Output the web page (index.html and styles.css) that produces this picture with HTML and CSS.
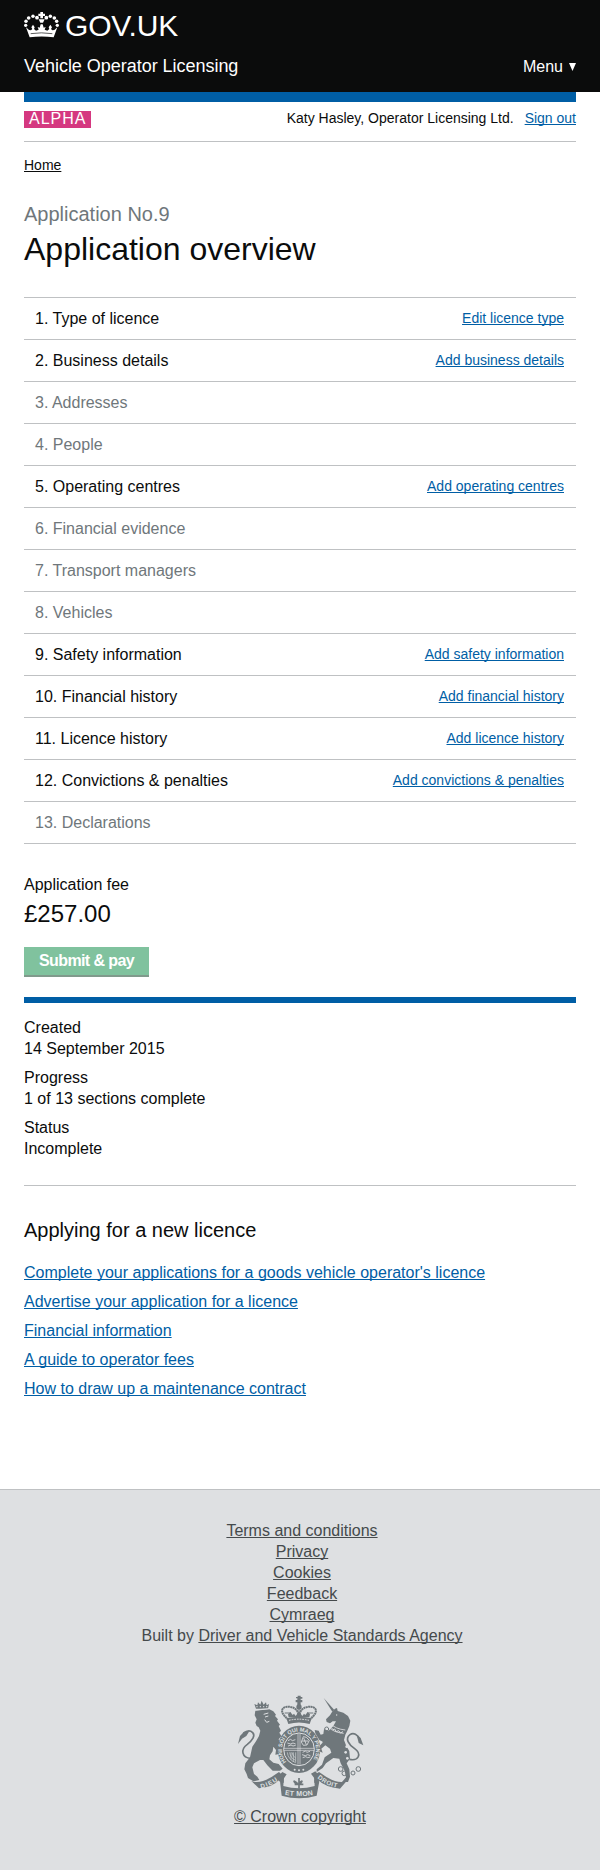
FILE: index.html
```html
<!DOCTYPE html>
<html lang="en">
<head>
<meta charset="utf-8">
<title>Application overview - Vehicle Operator Licensing</title>
<link rel="stylesheet" href="styles.css">
</head>
<body>
<header class="header">
  <a class="logo" href="#">
    <svg class="logo-crown" viewBox="0 0 105 78" fill="#fff" aria-hidden="true">
      <path d="M49 0h8v5h6v7h-6v7h-8v-7h-6V5h6z"/>
      <path d="M44 22h18l-5 10h-8z"/>
      <circle cx="39" cy="17" r="5.7"/><circle cx="27" cy="13" r="5.2"/><circle cx="14" cy="18" r="5.5"/><circle cx="6" cy="28" r="5.2"/><circle cx="5" cy="40" r="5"/>
      <circle cx="67" cy="17" r="5.7"/><circle cx="79" cy="13" r="5.2"/><circle cx="91" cy="18" r="5.5"/><circle cx="98" cy="28" r="5.2"/><circle cx="100" cy="40" r="5"/>
      <path d="M6 46l9 8 6 1 4-4-3-5 5-8 5 8-2 5 6 5 8-3-3-8 6 2 3-10h6l3 10 6-2-3 8 8 3 6-5-2-5 5-8 5 8-3 5 4 4 6-1 9-8-11 30q-36-5-72 0z"/>
      <path d="M20 65q32-5 65 0" fill="none" stroke="#0b0c0c" stroke-width="2"/>
    </svg>
    <span class="logo-text">GOV.UK</span>
  </a>
  <div class="header-row">
    <span class="service">Vehicle Operator Licensing</span>
    <a class="menu" href="#">Menu
      <svg class="menu-arrow" viewBox="0 0 7 8" aria-hidden="true"><path d="M0 0h7L3.5 8z" fill="#fff"/></svg>
    </a>
  </div>
</header>
<main class="page">
  <div class="phase">
    <span class="tag">ALPHA</span>
    <div class="user"><span>Katy Hasley, Operator Licensing Ltd.</span><a href="#">Sign out</a></div>
  </div>
  <nav class="crumbs"><a href="#">Home</a></nav>
  <p class="caption">Application No.9</p>
  <h1 class="title">Application overview</h1>
  <ul class="sections">
    <li class="row"><span>1. Type of licence</span><a href="#">Edit licence type</a></li>
    <li class="row"><span>2. Business details</span><a href="#">Add business details</a></li>
    <li class="row off"><span>3. Addresses</span></li>
    <li class="row off"><span>4. People</span></li>
    <li class="row"><span>5. Operating centres</span><a href="#">Add operating centres</a></li>
    <li class="row off"><span>6. Financial evidence</span></li>
    <li class="row off"><span>7. Transport managers</span></li>
    <li class="row off"><span>8. Vehicles</span></li>
    <li class="row"><span>9. Safety information</span><a href="#">Add safety information</a></li>
    <li class="row"><span>10. Financial history</span><a href="#">Add financial history</a></li>
    <li class="row"><span>11. Licence history</span><a href="#">Add licence history</a></li>
    <li class="row"><span>12. Convictions &amp; penalties</span><a href="#">Add convictions &amp; penalties</a></li>
    <li class="row off"><span>13. Declarations</span></li>
  </ul>
  <p class="fee-label">Application fee</p>
  <p class="fee">£257.00</p>
  <button class="submit" type="button">Submit &amp; pay</button>
  <dl class="summary">
    <dt>Created</dt><dd>14 September 2015</dd>
    <dt>Progress</dt><dd>1 of 13 sections complete</dd>
    <dt>Status</dt><dd>Incomplete</dd>
  </dl>
  <h2 class="subtitle">Applying for a new licence</h2>
  <ul class="guides">
    <li><a href="#">Complete your applications for a goods vehicle operator's licence</a></li>
    <li><a href="#">Advertise your application for a licence</a></li>
    <li><a href="#">Financial information</a></li>
    <li><a href="#">A guide to operator fees</a></li>
    <li><a href="#">How to draw up a maintenance contract</a></li>
  </ul>
</main>
<footer class="footer">
  <ul class="footer-links">
    <li><a href="#">Terms and conditions</a></li>
    <li><a href="#">Privacy</a></li>
    <li><a href="#">Cookies</a></li>
    <li><a href="#">Feedback</a></li>
    <li><a href="#">Cymraeg</a></li>
    <li>Built by <a href="#">Driver and Vehicle Standards Agency</a></li>
  </ul>
  <svg class="crest" viewBox="51 45 381 312" aria-hidden="true">
    <defs>
      <path id="garter" d="M199 246a51 55 0 1 1 76 0"/>
      <path id="ribbon-left" d="M123 325q30-6 56-27"/>
      <path id="ribbon-mid" d="M194 344q43 9 89 0"/>
      <path id="ribbon-right" d="M292 294q27 24 63 30"/>
    </defs>
    <g fill="#6f777b">
      <!-- lion -->
      <path d="M108 86l-5-14 9 4 2-9 7 7 4-12 6 12 7-7 2 9 7-4-3 14z"/>
      <path d="M106 92L148 88 160 94 168 104 165 108 174 118 171 122 180 134 176 138 183 152 178 158 184 168 176 178 180 190 174 205 178 222 166 224 168 210 160 200 158 214 150 226 148 238 160 248 176 252 188 266 180 272 158 272 142 256 130 240 120 240 102 250 97 262 102 282 112 290 118 300 100 304 84 294 80 282 73 268 76 250 90 232 94 214 97 200 108 184 117 168 121 152 116 142 110 138 106 128 110 118 104 106z"/>
      <path d="M54 192L60 168 72 155 88 154 79 168 66 176z"/>
      <!-- unicorn -->
      <path d="M311 54l32 36-6 5z"/>
      <path d="M336 96L345 86 351 84 353 93 370 98 384 108 391 122 388 138 382 152 376 164 372 180 378 196 388 214 390 236 380 250 388 268 390 290 384 306 366 306 378 292 374 272 362 250 358 236 340 234 318 250 308 264 290 276 290 268 306 254 314 232 334 218 330 206 316 196 304 206 308 218 298 214 296 200 310 186 298 180 286 160 284 150 296 152 302 164 310 162 312 148 326 152 340 138 348 124 338 124 330 130 320 126 318 118 330 106z"/>
      <path d="M410 164L422 174 430 196 416 189z"/>
      <!-- crown -->
      <path d="M232 60v-5h-4v-4h5v-4h9v4h5v5h-5v4h5v7h-5v9h-10v-9h-5v-7z"/>
      <circle cx="237" cy="81" r="8"/>
      <path d="M199 115q38-10 76 0l-6 17q-32-9-64 0z"/>
      <path d="M206 112l-2-9 7-7 7 9 4-4 5 7 10-14 10 14 5-7 4 4 7-9 7 7-2 9z"/>
      <!-- shield and ribbons -->
      <ellipse cx="237" cy="208" rx="64" ry="71"/>
      <path d="M94 303q30 12 75-22l8-5 10 10-8 12q-20 24-62 27z"/>
      <path d="M380 303q-30 12-75-22l-8-5-13 8 8 14q23 24 68 28z"/>
      <path d="M180 304l11-4-1 18q47 14 94 0l-1-18 15 4-8 43q-52 15-105 0z"/>
      <path d="M187 276q-16 15-11 27l15 6 1-14 8-12zM286 274q17 17 12 29l-15 6-1-16-9-12z"/>
    </g>
    <g fill="none" stroke="#6f777b">
      <path d="M92 235C66 233 60 209 82 193 97 181 107 167 98 158 91 151 80 152 70 160" stroke-width="5"/>
      <path d="M388 238C416 244 426 222 404 206 386 193 374 176 390 164 400 157 414 163 418 178" stroke-width="5"/>
      <path d="M206 119C170 92 190 76 212 81 230 84 235 98 235 104M268 119C304 92 284 76 262 81 244 84 239 98 239 104" stroke-width="6" stroke-dasharray="6 1.2"/>
      <path d="M194 99h18m50 0h18M237 88v24" stroke-width="3"/>
      <g stroke-width="3"><circle cx="320" cy="147" r="6"/><circle cx="314" cy="186" r="5"/><circle cx="362" cy="267" r="7"/><circle cx="373" cy="280" r="7"/><circle cx="399" cy="279" r="6"/><circle cx="415" cy="267" r="7"/></g>
      <path d="M237 294v32m-13-13h26m-23-2q-12-15 6 0m8 0q12-15-6 0" stroke-width="5"/>
    </g>
    <g fill="none" stroke="#dee0e2">
      <ellipse cx="237" cy="208" rx="46" ry="49" stroke-width="3"/>
      <path d="M234 162v92M240 162v92M192 205h90M192 211h90" stroke-width="2"/>
      <path d="M204 182l8-4 5 4 9-3m-24 10l10 3 7-3 8 3m-23 6l9-3 6 3 8-2m23-26l-6 16 6 10 11-1 7-14-9-9zm-4 13h19m-14-9l8 20m-11 23l8-4 5 4 9-3m-24 10l10 3 7-3 8 3m-23 6l9-3 6 3 8-2" stroke-width="2.5"/>
      <path d="M202 217q2 22 25 31m-18-31q2 18 18 24m-11-24q2 12 11 17m-7-17v28m-7-28v22m14-22v30" stroke-width="1.8"/>
      <path d="M207 121q30-7 60 0" stroke-width="3" stroke-dasharray="5 3"/>
      <path d="M325 141q17 17 46 19m-39-29q14 16 44 19" stroke-width="2.5"/>
      <path d="M334 143l5 6 5-2 5 8 7-3 5 7 8-4" stroke-width="3"/>
      <path d="M131 103l14-4m-10 12l10-3m-11 11l6 8 8-3m-42-34l40-4" stroke-width="3"/>
    </g>
    <g fill="#dee0e2">
      <circle cx="111" cy="80" r="2"/><circle cx="121" cy="80" r="2"/><circle cx="131" cy="80" r="2"/><circle cx="140" cy="80" r="2"/>
      <circle cx="350" cy="105" r="2"/>
      <circle cx="224" cy="269" r="3"/><circle cx="237" cy="271" r="3"/><circle cx="250" cy="269" r="3"/>
      <circle cx="380" cy="200" r="4"/><circle cx="377" cy="217" r="4"/><circle cx="382" cy="235" r="4"/>
    </g>
    <g class="crest-text" fill="#dee0e2">
      <text font-size="17"><textPath href="#garter" textLength="236" lengthAdjust="spacingAndGlyphs">HONI SOIT QUI MAL Y PENSE</textPath></text>
      <text font-size="19"><textPath href="#ribbon-left" textLength="56">DIEU</textPath></text>
      <text font-size="21"><textPath href="#ribbon-mid" textLength="86">ET MON</textPath></text>
      <text font-size="19"><textPath href="#ribbon-right" textLength="66">DROIT</textPath></text>
    </g>
  </svg>
  <a class="copyright" href="#">© Crown copyright</a>
</footer>
</body>
</html>
```
FILE: styles.css
```css
* { box-sizing: border-box; }
body, p, h1, h2, ul, dl, dd { margin: 0; padding: 0; }
body {
  background: #fff;
  color: #0b0c0c;
  font: 16px/21px "Liberation Sans", Arial, Helvetica, sans-serif;
}
ul { list-style: none; }
a { color: #005ea5; text-decoration: underline; text-decoration-skip-ink: none; }

.header { height: 92px; padding: 9px 24px 0; background: #0b0c0c; color: #fff; }
.logo { display: flex; align-items: flex-start; gap: 6px; height: 35px; color: #fff; text-decoration: none; }
.logo-crown { width: 35px; height: 26px; margin-top: 3px; }
.logo-text { font-size: 30px; line-height: 33px; letter-spacing: -0.15px; }
.header-row { display: flex; justify-content: space-between; align-items: baseline; margin-top: 11px; }
.service { font-size: 18px; line-height: 23px; letter-spacing: -0.03px; }
.menu { display: flex; align-items: center; gap: 6px; color: #fff; text-decoration: none; }
.menu-arrow { width: 7px; height: 8px; }

.page { padding: 0 24px; height: 1397px; }
.phase {
  display: flex;
  justify-content: space-between;
  align-items: flex-start;
  height: 50px;
  padding-top: 9px;
  border-top: 10px solid #005ea5;
  border-bottom: 1px solid #bfc1c3;
}
.tag { width: 67px; height: 17px; padding-left: 5px; background: #d53880; color: #fff; line-height: 15px; letter-spacing: 1px; }
.user { display: flex; gap: 11px; font-size: 14px; line-height: 14px; }
.crumbs { padding-top: 14px; font-size: 14px; line-height: 18px; }
.crumbs a { color: #0b0c0c; }
.caption { margin-top: 27px; color: #6f777b; font-size: 20px; line-height: 26px; }
.title { margin-top: 4px; font-size: 32px; font-weight: 400; line-height: 36px; }

.sections { margin-top: 30px; border-top: 1px solid #bfc1c3; }
.row { display: flex; justify-content: space-between; height: 42px; padding: 10px 12px 0 11px; border-bottom: 1px solid #bfc1c3; }
.row a { font-size: 14px; line-height: 20px; }
.off { color: #6f777b; }

.fee-label { margin-top: 30px; }
.fee { margin-top: 4px; font-size: 24px; line-height: 30px; }
.submit {
  display: block;
  width: 125px;
  height: 30px;
  margin-top: 18px;
  padding: 0 0 1px;
  border: 0;
  border-bottom: 2px solid #809a8c;
  background: #80c29e;
  color: #fff;
  font: bold 16px/26px "Liberation Sans", Arial, sans-serif;
  letter-spacing: -0.6px;
}
.summary { height: 189px; margin-top: 20px; padding-top: 14px; border-top: 6px solid #005ea5; border-bottom: 1px solid #bfc1c3; }
.summary dd { margin-bottom: 8px; }
.subtitle { margin-top: 31px; font-size: 20px; font-weight: 400; line-height: 26px; }
.guides { display: flex; flex-direction: column; gap: 8px; margin-top: 19px; }

.footer {
  display: flex;
  flex-direction: column;
  align-items: center;
  height: 381px;
  padding-top: 30px;
  border-top: 1px solid #bfc1c3;
  background: #dee0e2;
  color: #454a4c;
}
.footer a { color: #454a4c; }
.footer-links { padding-left: 4px; text-align: center; }
.crest { width: 127px; height: 104px; margin-top: 49px; }
.crest-text { font-weight: 700; }
.copyright { margin-top: 7px; }
```
